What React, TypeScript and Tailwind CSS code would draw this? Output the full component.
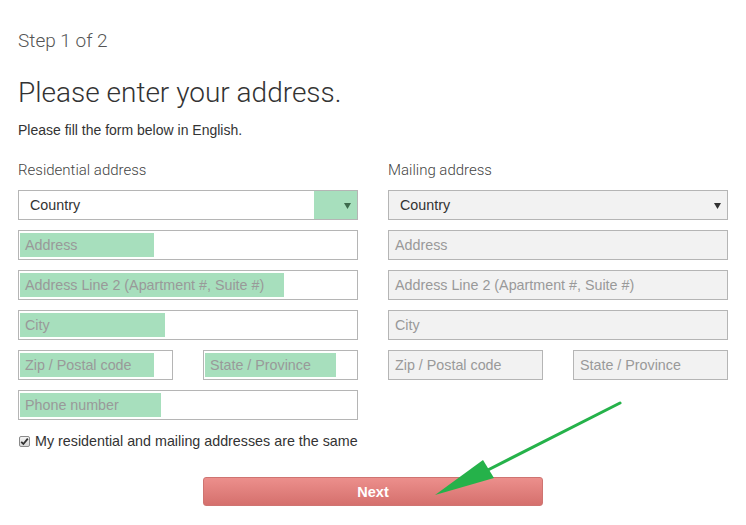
import React from "react";

const sans = { fontFamily: '"Liberation Sans", Arial, sans-serif' };
const roboto = { fontFamily: "Roboto, sans-serif" };

function Field({ label, hl, grey, className = "" }: { label: string; hl?: number; grey?: boolean; className?: string }) {
  return (
    <div
      className={`relative h-[30px] border border-[#b5b5b5] ${grey ? "bg-[#f2f2f2]" : "bg-white"} flex items-center pl-[6px] pt-[2px] text-[14.3px] text-[#999] ${className}`}
    >
      {hl ? <div className="absolute left-[1px] top-[2px] bottom-[2px] bg-[#a7dfbd]" style={{ width: hl }} /> : null}
      <span className="relative">{label}</span>
    </div>
  );
}

function Select({ grey, hl }: { grey?: boolean; hl?: boolean }) {
  return (
    <div className={`relative h-[30px] border border-[#b5b5b5] ${grey ? "bg-[#f2f2f2]" : "bg-white"} flex items-center pl-[11px] pt-[2px] text-[14.3px] text-[#333]`}>
      {hl ? <div className="absolute right-0 top-0 bottom-0 w-[43px] bg-[#a7dfbd]" /> : null}
      <span className="relative">Country</span>
      <svg className="absolute right-[6px] top-[12px]" width="7" height="6" viewBox="0 0 7 6">
        <path d="M0 0 L7 0 L3.5 6 Z" fill={hl ? "#3d6b4d" : "#333"} />
      </svg>
    </div>
  );
}

export default function App() {
  return (
    <div className="relative w-[746px] h-[525px] bg-white overflow-hidden" style={sans}>
      <div className="pl-[18px] pt-[27px] w-[728px]">
        <div className="text-[19px] leading-[28px] font-light text-[#555]" style={roboto}>
          Step 1 of 2
        </div>
        <div className="mt-[20px] text-[28px] leading-[36px] font-light text-[#333]" style={roboto}>
          Please enter your address.
        </div>
        <div className="mt-[10px] text-[14px] leading-[18px] text-[#333]">Please fill the form below in English.</div>
        <div className="mt-[20px] flex gap-[30px]">
          <div className="w-[340px] flex flex-col">
            <div className="text-[15px] leading-[22px] font-light text-[#444]" style={roboto}>
              Residential address
            </div>
            <div className="mt-[9px] flex flex-col gap-[10px]">
              <Select hl />
              <Field label="Address" hl={134} />
              <Field label="Address Line 2 (Apartment #, Suite #)" hl={264} />
              <Field label="City" hl={145} />
              <div className="flex justify-between">
                <Field label="Zip / Postal code" hl={134} className="w-[155px]" />
                <Field label="State / Province" hl={131} className="w-[155px]" />
              </div>
              <Field label="Phone number" hl={141} />
            </div>
          </div>
          <div className="w-[340px] flex flex-col">
            <div className="text-[15px] leading-[22px] font-light text-[#444]" style={roboto}>
              Mailing address
            </div>
            <div className="mt-[9px] flex flex-col gap-[10px]">
              <Select grey />
              <Field label="Address" grey />
              <Field label="Address Line 2 (Apartment #, Suite #)" grey />
              <Field label="City" grey />
              <div className="flex justify-between">
                <Field label="Zip / Postal code" grey className="w-[155px]" />
                <Field label="State / Province" grey className="w-[155px]" />
              </div>
            </div>
          </div>
        </div>
        <div className="mt-[12px] flex items-center h-[20px] text-[14.3px] text-[#333]">
          <div className="ml-[1px] -mt-[1px] w-[11px] h-[11px] border border-[#8a8a8a] rounded-[2px] bg-gradient-to-b from-[#f4f4f4] to-[#d8d8d8] flex items-center justify-center">
            <svg width="9" height="9" viewBox="0 0 9 9">
              <path d="M1.2 4.8 L3.4 7 L7.8 1.6" stroke="#333" strokeWidth="1.8" fill="none" />
            </svg>
          </div>
          <span className="ml-[5px]">My residential and mailing addresses are the same</span>
        </div>
        <div className="mt-[25px] flex justify-center">
          <div className="w-[340px] h-[29px] rounded-[3px] border border-[#cf7471] bg-gradient-to-b from-[#ec8f8c] to-[#d5706d] flex items-center justify-center pt-[2px] text-white font-bold text-[14.5px]">
            Next
          </div>
        </div>
      </div>
      <svg className="absolute left-0 top-0 pointer-events-none" width="746" height="525" viewBox="0 0 746 525">
        <line x1="620" y1="403" x2="480" y2="474" stroke="#25b24a" strokeWidth="3" strokeLinecap="round" />
        <path d="M435 495 L483 460 L494 478 Z" fill="#25b24a" />
      </svg>
    </div>
  );
}
